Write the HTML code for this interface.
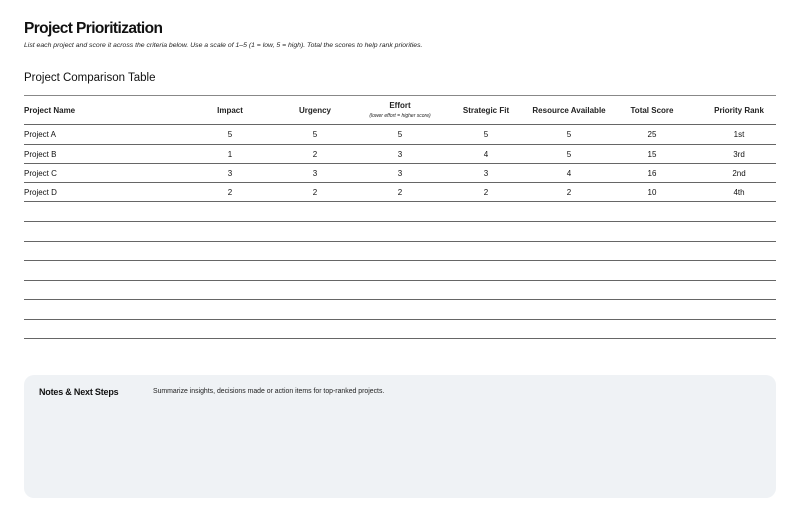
<!DOCTYPE html>
<html><head><style>
body{margin:0;width:800px;height:523px;background:#fff;font-family:"Liberation Sans",sans-serif;color:#111;position:relative;overflow:hidden}
.a{position:absolute;white-space:nowrap}
.h{font-size:8px;font-weight:bold;transform:translateX(-50%);text-align:center;color:#222}
.c{font-size:8px;transform:translateX(-50%)}
.l{position:absolute;left:24px;width:752px;height:1px;background:#666}
</style></head><body>
<div class="a" style="left:24px;top:20px;font-size:15.5px;font-weight:bold;letter-spacing:-0.6px">Project Prioritization</div>
<div class="a" style="left:24px;top:42px;font-size:6.85px;font-style:italic;color:#222">List each project and score it across the criteria below. Use a scale of 1–5 (1 = low, 5 = high). Total the scores to help rank priorities.</div>
<div class="a" style="left:24px;top:72px;font-size:11.5px">Project Comparison Table</div>
<div class="l" style="top:95px;background:#888"></div>
<div class="a" style="left:24px;top:106px;font-size:8px;font-weight:bold;color:#222">Project Name</div>
<div class="a h" style="left:230px;top:106px">Impact</div>
<div class="a h" style="left:315px;top:106px">Urgency</div>
<div class="a h" style="left:400px;top:101px">Effort<br><span style="font-size:5px;font-weight:normal;font-style:italic">(lower effort = higher score)</span></div>
<div class="a h" style="left:486px;top:106px">Strategic Fit</div>
<div class="a h" style="left:569px;top:106px">Resource Available</div>
<div class="a h" style="left:652px;top:106px">Total Score</div>
<div class="a h" style="left:739px;top:106px">Priority Rank</div>
<div class="l" style="top:124px"></div>
<div class="l" style="top:144px"></div>
<div class="l" style="top:163px"></div>
<div class="l" style="top:182px"></div>
<div class="l" style="top:201px"></div>
<div class="l" style="top:221px"></div>
<div class="l" style="top:241px"></div>
<div class="l" style="top:260px"></div>
<div class="l" style="top:280px"></div>
<div class="l" style="top:299px"></div>
<div class="l" style="top:319px"></div>
<div class="l" style="top:338px"></div>

<div class="a" style="left:24px;top:130px;font-size:8px">Project A</div>
<div class="a c" style="left:230px;top:130px">5</div><div class="a c" style="left:315px;top:130px">5</div><div class="a c" style="left:400px;top:130px">5</div><div class="a c" style="left:486px;top:130px">5</div><div class="a c" style="left:569px;top:130px">5</div><div class="a c" style="left:652px;top:130px">25</div><div class="a c" style="left:739px;top:130px">1st</div>

<div class="a" style="left:24px;top:150px;font-size:8px">Project B</div>
<div class="a c" style="left:230px;top:150px">1</div><div class="a c" style="left:315px;top:150px">2</div><div class="a c" style="left:400px;top:150px">3</div><div class="a c" style="left:486px;top:150px">4</div><div class="a c" style="left:569px;top:150px">5</div><div class="a c" style="left:652px;top:150px">15</div><div class="a c" style="left:739px;top:150px">3rd</div>

<div class="a" style="left:24px;top:169px;font-size:8px">Project C</div>
<div class="a c" style="left:230px;top:169px">3</div><div class="a c" style="left:315px;top:169px">3</div><div class="a c" style="left:400px;top:169px">3</div><div class="a c" style="left:486px;top:169px">3</div><div class="a c" style="left:569px;top:169px">4</div><div class="a c" style="left:652px;top:169px">16</div><div class="a c" style="left:739px;top:169px">2nd</div>

<div class="a" style="left:24px;top:188px;font-size:8px">Project D</div>
<div class="a c" style="left:230px;top:188px">2</div><div class="a c" style="left:315px;top:188px">2</div><div class="a c" style="left:400px;top:188px">2</div><div class="a c" style="left:486px;top:188px">2</div><div class="a c" style="left:569px;top:188px">2</div><div class="a c" style="left:652px;top:188px">10</div><div class="a c" style="left:739px;top:188px">4th</div>

<div class="a" style="left:24px;top:375px;width:752px;height:123px;background:#eff2f5;border-radius:10px"></div>
<div class="a" style="left:39px;top:387px;font-size:9px;font-weight:bold;letter-spacing:-0.2px">Notes &amp; Next Steps</div>
<div class="a" style="left:153px;top:388px;font-size:6.9px;color:#222">Summarize insights, decisions made or action items for top-ranked projects.</div>
</body></html>
